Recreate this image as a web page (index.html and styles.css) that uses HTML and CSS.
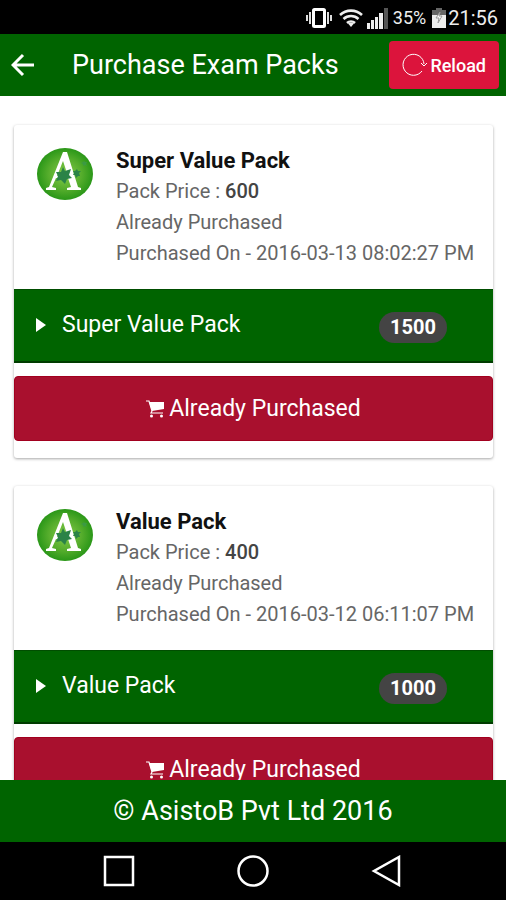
FILE: index.html
```html
<!DOCTYPE html>
<html lang="en">
<head>
<meta charset="utf-8">
<meta name="viewport" content="width=device-width, initial-scale=1">
<title>Purchase Exam Packs</title>
<link rel="stylesheet" href="styles.css">
</head>
<body>
<svg class="sprite" aria-hidden="true">
  <defs>
    <radialGradient id="badge-fill" cx="0.5" cy="0.5" r="0.5">
      <stop offset="0" stop-color="#86cc4a"/>
      <stop offset="0.6" stop-color="#55ad2c"/>
      <stop offset="1" stop-color="#2a9718"/>
    </radialGradient>
  </defs>
  <symbol id="logo" viewBox="0 0 58 54">
    <ellipse cx="29" cy="27" rx="28" ry="26" fill="url(#badge-fill)"/>
    <path d="M27 5h4l11 35 3 1v2H31v-2l4-1-3-9H20l-4 9 4 1v2H10v-2l3-1zM27 14l-6 15h11z" fill="#fff" fill-rule="evenodd"/>
    <path d="M27 20l2 4 6-2-2 6 3 3-5 1-2 5-4-4-5 1 2-5-2-4 5 0z" fill="#2b8347"/>
    <path d="M41 22l1 2 3 0-2 2 1 3-2 0-2 2-1-3-2 0 1-2-1-2 2 0z" fill="#2b8347"/>
    <path d="M48 14l1 1 2 0-1 2 1 2-2-1-2 1 0-2-2-1 2-1z" fill="#3c9a43"/>
  </symbol>
  <symbol id="cart" viewBox="0 0 18 18">
    <path d="M0 1h3l3 10-1 2h12" fill="none" stroke="#fff" stroke-width="1.2"/>
    <path d="M3 2h15v7L6 11z" fill="#fff"/>
    <circle cx="5.500" cy="16" r="1.500" fill="#fff"/>
    <circle cx="15.500" cy="16" r="1.500" fill="#fff"/>
  </symbol>
</svg>

<div class="screen">
  <div class="status">
    <svg class="status-vibrate" viewBox="0 0 26 22" aria-hidden="true">
      <rect x="7.5" y="2.5" width="11" height="17" rx="1" fill="none" stroke="#fff" stroke-width="3"/>
      <path d="M4 5v12M22 5v12" stroke="#ddd" stroke-width="2"/>
      <path d="M1 8v6M25 8v6" stroke="#ddd" stroke-width="2"/>
    </svg>
    <svg class="status-wifi" viewBox="0 0 24 20" aria-hidden="true">
      <path d="M1 7a16 16 0 0 1 22 0M4.500 11a11 11 0 0 1 15 0M8 15a6 6 0 0 1 8 0" fill="none" stroke="#eee" stroke-width="2.600"/>
      <path d="M9 15.500a5 5 0 0 1 6 0L12 19z" fill="#eee"/>
    </svg>
    <svg class="status-signal" viewBox="0 0 21 21" aria-hidden="true">
      <path d="M0 15h3v6H0zM4 12h3v9H4zM8 9h3v12H8zM12 5h4v16h-4z" fill="#eee"/>
      <path d="M17 0h4v21h-4z" fill="#555"/>
    </svg>
    <span class="status-percent">35%</span>
    <svg class="status-battery" viewBox="0 0 14 20" aria-hidden="true">
      <path d="M4 0h6v2h4v6H0V2h4z" fill="#666"/>
      <path d="M0 7h14v13H0z" fill="#eee"/>
      <path d="M8 4l-4 6h3l-1 5 4-7H7z" fill="#fff" stroke="#999" stroke-width="1"/>
    </svg>
    <time class="status-time">21:56</time>
  </div>

  <header class="toolbar">
    <button class="back" type="button" aria-label="Back">
      <svg viewBox="0 0 24 24" aria-hidden="true">
        <path d="M23 12H2M12 2L2 12l10 10" fill="none" stroke="#fff" stroke-width="3"/>
      </svg>
    </button>
    <h1 class="toolbar-title">Purchase Exam Packs</h1>
    <button class="reload" type="button">
      <svg viewBox="0 0 26 24" aria-hidden="true">
        <path d="M20 18A10.500 10.500 0 1 1 22 11" fill="none" stroke="#fff" stroke-width="1"/>
        <path d="M19 10l3 3 3-3" fill="none" stroke="#fff" stroke-width="1"/>
      </svg>
      Reload
    </button>
  </header>

  <main class="packs">
    <article class="card">
      <div class="pack">
        <svg class="pack-logo" aria-hidden="true"><use href="#logo"/></svg>
        <div class="pack-text">
          <h2>Super Value Pack</h2>
          <p>Pack Price : <strong>600</strong></p>
          <p>Already Purchased</p>
          <p>Purchased On - 2016-03-13 08:02:27 PM</p>
        </div>
      </div>
      <button class="expand" type="button" aria-expanded="false">
        <svg class="caret" viewBox="0 0 10 14" aria-hidden="true"><path d="M0 0l10 7-10 7z" fill="#fff"/></svg>
        <span class="expand-name">Super Value Pack</span>
        <span class="count">1500</span>
      </button>
      <button class="buy" type="button">
        <svg class="cart" aria-hidden="true"><use href="#cart"/></svg>
        Already Purchased
      </button>
    </article>

    <article class="card">
      <div class="pack">
        <svg class="pack-logo" aria-hidden="true"><use href="#logo"/></svg>
        <div class="pack-text">
          <h2>Value Pack</h2>
          <p>Pack Price : <strong>400</strong></p>
          <p>Already Purchased</p>
          <p>Purchased On - 2016-03-12 06:11:07 PM</p>
        </div>
      </div>
      <button class="expand" type="button" aria-expanded="false">
        <svg class="caret" viewBox="0 0 10 14" aria-hidden="true"><path d="M0 0l10 7-10 7z" fill="#fff"/></svg>
        <span class="expand-name">Value Pack</span>
        <span class="count">1000</span>
      </button>
      <button class="buy" type="button">
        <svg class="cart" aria-hidden="true"><use href="#cart"/></svg>
        Already Purchased
      </button>
    </article>
  </main>

  <footer class="footer">© AsistoB Pvt Ltd 2016</footer>

  <nav class="system-nav" aria-label="System">
    <button type="button" aria-label="Recent apps">
      <svg viewBox="0 0 32 32" aria-hidden="true"><rect x="2" y="2" width="28" height="28" fill="none" stroke="#fff" stroke-width="2.500"/></svg>
    </button>
    <button type="button" aria-label="Home">
      <svg viewBox="0 0 32 32" aria-hidden="true"><circle cx="16" cy="16" r="14.500" fill="none" stroke="#fff" stroke-width="2.500"/></svg>
    </button>
    <button type="button" aria-label="Go back">
      <svg viewBox="0 0 32 32" aria-hidden="true"><path d="M28 2v28L3 16z" fill="none" stroke="#fff" stroke-width="2.500"/></svg>
    </button>
  </nav>
</div>
</body>
</html>
```
FILE: styles.css
```css
* {
  box-sizing: border-box;
}

body,
h1,
h2,
p {
  margin: 0;
}

body {
  font-family: Roboto, "Liberation Sans", sans-serif;
  background: #fff;
}

button {
  margin: 0;
  padding: 0;
  border: 0;
  background: none;
  color: #fff;
  font: inherit;
  cursor: pointer;
}

svg {
  display: block;
  flex: none;
}

.sprite {
  position: absolute;
  width: 0;
  height: 0;
}

.screen {
  display: flex;
  flex-direction: column;
  height: 100vh;
}

/* Status bar */
.status {
  flex: none;
  display: flex;
  align-items: center;
  justify-content: flex-end;
  padding: 6px 8px 4px;
  background: #000;
  color: #eee;
  line-height: 24px;
}

.status-vibrate {
  width: 26px;
  height: 22px;
  margin-right: 7px;
}

.status-wifi {
  width: 24px;
  height: 20px;
  margin-right: 4px;
}

.status-signal {
  width: 21px;
  height: 21px;
  margin-right: 5px;
}

.status-percent {
  font-size: 18px;
  margin-right: 6px;
}

.status-battery {
  width: 14px;
  height: 20px;
  margin-right: 2px;
}

.status-time {
  font-size: 20px;
}

/* Toolbar */
.toolbar {
  flex: none;
  display: flex;
  align-items: center;
  padding: 7px 7px 7px 11px;
  background: #006400;
  color: #fff;
}

.back svg {
  width: 24px;
  height: 24px;
}

.toolbar-title {
  flex: 1;
  padding-left: 37px;
  font-size: 27px;
  font-weight: 400;
  line-height: 48px;
  white-space: nowrap;
}

.reload {
  display: flex;
  align-items: center;
  gap: 2px;
  height: 48px;
  padding: 0 13px;
  border-radius: 4px;
  background: #dc143c;
  font-size: 18px;
  font-weight: 500;
}

.reload svg {
  width: 26px;
  height: 24px;
}

/* Pack list */
.packs {
  flex: 1;
  min-height: 0;
  overflow-y: auto;
  scrollbar-width: none;
  display: flex;
  flex-direction: column;
  gap: 28px;
  padding: 29px 13px 28px 14px;
}

.card {
  flex: none;
  padding-bottom: 17px;
  border-radius: 3px;
  background: #fff;
  box-shadow: 0 1px 3px rgba(0, 0, 0, 0.35);
}

.pack {
  display: flex;
  gap: 22px;
  padding: 20px 12px 20px 22px;
}

.pack-logo {
  width: 58px;
  height: 54px;
  margin-top: 2px;
}

.pack-text {
  color: #666;
  font-size: 20px;
  line-height: 31px;
}

.pack-text h2 {
  color: #111;
  font-size: 22px;
  font-weight: 700;
}

.pack-text strong {
  color: #444;
  font-weight: 500;
}

.expand {
  display: flex;
  align-items: center;
  width: 100%;
  height: 74px;
  padding: 0 46px 2px 22px;
  border-top: 1px solid #004d00;
  border-bottom: 2px solid #003c00;
  background: #006400;
  text-align: left;
}

.caret {
  width: 10px;
  height: 14px;
}

.expand-name {
  flex: 1;
  padding-left: 16px;
  font-size: 23px;
}

.count {
  margin-top: 5px;
  padding: 0 11px;
  border-radius: 16px;
  background: #444;
  font-size: 20px;
  font-weight: 700;
  line-height: 31px;
}

.buy {
  display: flex;
  align-items: center;
  justify-content: center;
  gap: 5px;
  width: 100%;
  height: 65px;
  margin-top: 13px;
  border: 1px solid #a2001f;
  border-radius: 4px;
  background: #a9102e;
  font-size: 23px;
}

.cart {
  width: 18px;
  height: 18px;
}

/* Footer and system navigation */
.footer {
  flex: none;
  background: #006400;
  color: #fff;
  font-size: 27px;
  line-height: 62px;
  text-align: center;
}

.system-nav {
  flex: none;
  display: flex;
  justify-content: center;
  gap: 102px;
  padding: 13px 0;
  background: #000;
}

.system-nav svg {
  width: 32px;
  height: 32px;
}
```
